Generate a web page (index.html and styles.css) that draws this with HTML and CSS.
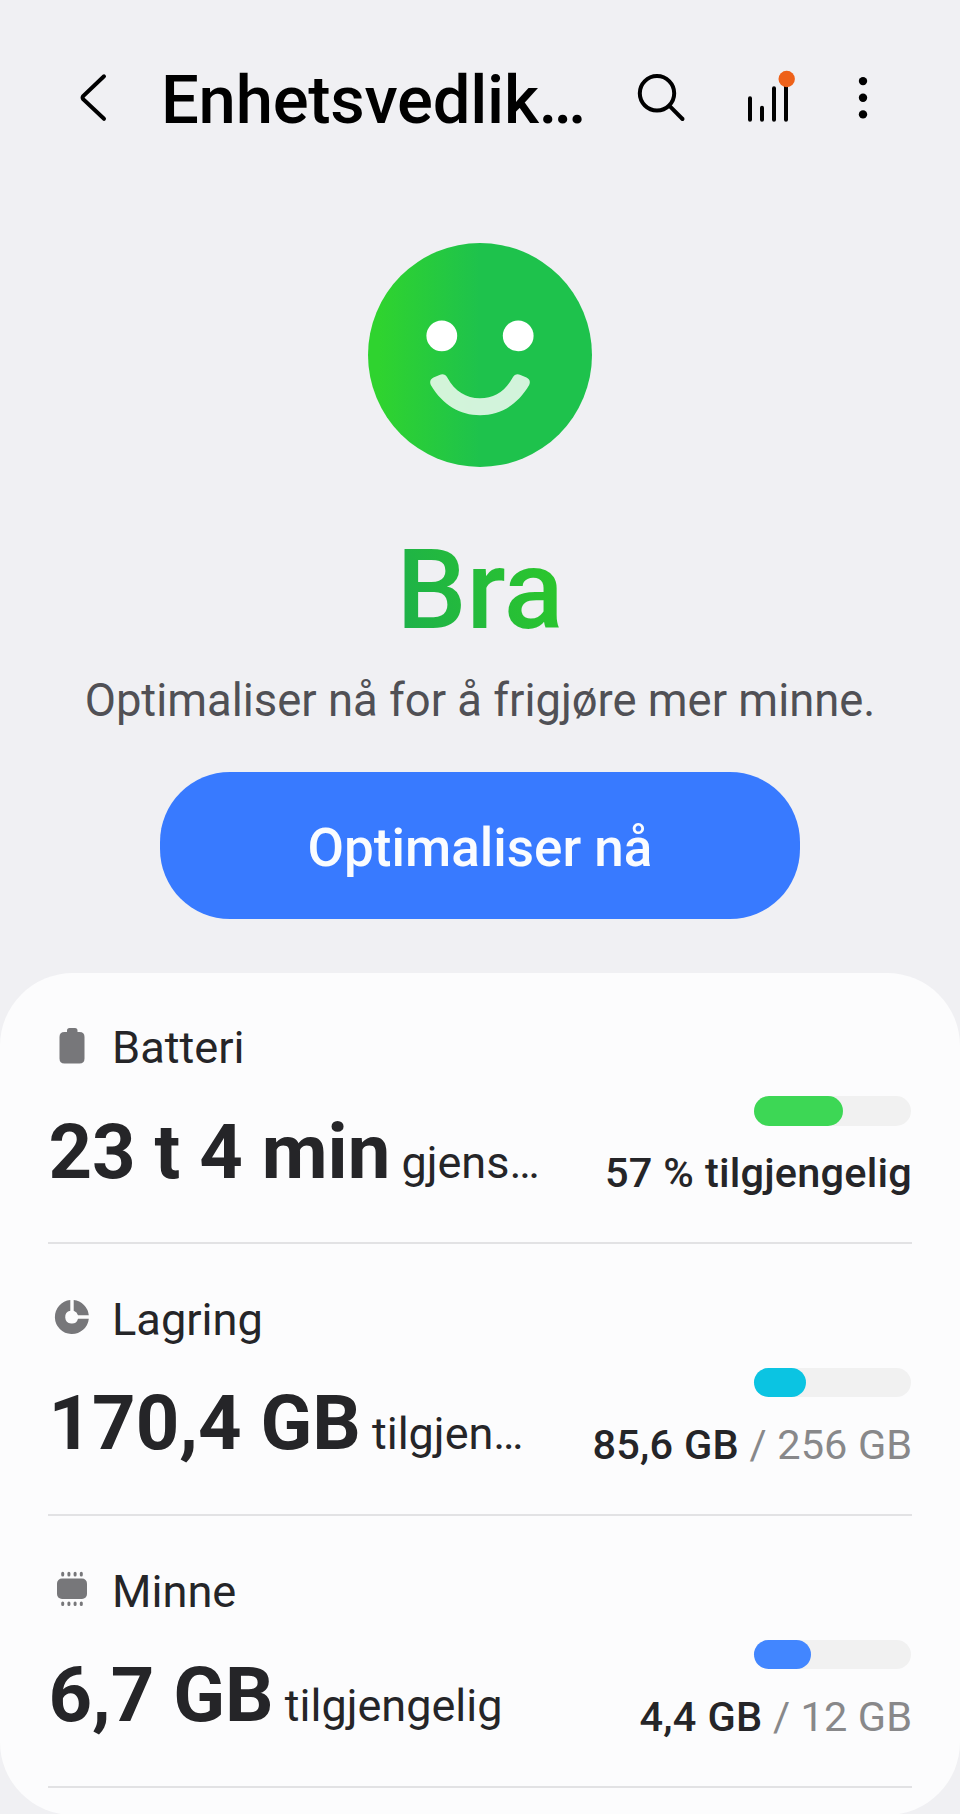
FILE: index.html
```
<!DOCTYPE html>
<html lang="no">
<head>
  <meta charset="UTF-8" />
  <meta name="viewport" content="width=device-width, initial-scale=1.0"/>
  <title>Enhetsvedlikehold</title>
  <link rel="stylesheet" href="styles.css">
</head>
<body>
  <header class="header">
    <svg class="icon back" viewBox="0 0 60 60">
      <path d="M40 8.3 L19.2 28 Q18 29.6 19.2 31.2 L40 50.8"/>
    </svg>
    <h1>Enhetsvedlik…</h1>
    <svg class="icon search" viewBox="0 0 60 60">
      <circle cx="27" cy="25.3" r="17.2"/>
      <path d="M39.7 38.2 L52.5 51"/>
    </svg>
    <svg class="icon stats" viewBox="0 0 60 60">
      <path d="M12 30.3 V51.7 M24 39.8 V51.7 M36 20.3 V51.7 M48 14 V51.7"/>
      <circle class="badge" cx="48.7" cy="11" r="8.2"/>
    </svg>
    <svg class="icon more" viewBox="0 0 60 60">
      <circle cx="30" cy="13.1" r="4.2"/>
      <circle cx="30" cy="29.8" r="4.2"/>
      <circle cx="30" cy="46.4" r="4.2"/>
    </svg>
  </header>

  <section class="status">
    <svg class="face" viewBox="0 0 224 224">
      <defs>
        <linearGradient id="faceFill" x1="0" y1="0" x2="1" y2="0">
          <stop offset="0.05" stop-color="#2fd32f"/>
          <stop offset="0.5" stop-color="#1ec24c"/>
        </linearGradient>
      </defs>
      <circle cx="112" cy="112" r="112" fill="url(#faceFill)"/>
      <circle cx="73.8" cy="92.8" r="15.4" fill="#fff"/>
      <circle cx="150.2" cy="92.8" r="15.4" fill="#fff"/>
      <path class="smile" d="M71.5 131.9 Q76.5 129.8 79.3 134.5 C87 148.5 98 155.2 112 155.2 S137 148.5 144.7 134.5 Q147.5 129.8 152.5 131.9 L158.5 134.5 Q163.3 137 161.2 142 C149 162.5 132 172.2 112 172.2 S75 162.5 62.8 142 Q60.7 137 65.5 134.5 Z"/>
    </svg>
    <h2>Bra</h2>
    <p>Optimaliser nå for å frigjøre mer minne.</p>
    <button>Optimaliser nå</button>
  </section>

  <main class="card">
    <div class="row">
      <div class="info">
        <div class="label">
          <svg viewBox="0 0 48 48">
            <path d="M19 6.5 Q19 4 21.5 4 H27 Q29.5 4 29.5 6.5 V8 H31.5 Q36.5 8 36.5 13 V34.5 Q36.5 39.5 31.5 39.5 H16.5 Q11.5 39.5 11.5 34.5 V13 Q11.5 8 16.5 8 H19 Z"/>
          </svg>
          <span>Batteri</span>
        </div>
        <div class="value"><strong>23 t 4 min</strong> <span>gjens…</span></div>
      </div>
      <div class="usage">
        <div class="bar"><div class="fill battery" style="width: 57%"></div></div>
        <div class="amount"><b>57 % tilgjengelig</b></div>
      </div>
    </div>

    <div class="row">
      <div class="info">
        <div class="label">
          <svg viewBox="0 0 48 48">
            <path d="M22.3 5.1 A17 17 0 1 0 40.8 23.7 H30 A6.5 6.5 0 1 1 22.3 15.7 Z"/>
            <path d="M25.7 5.1 A17 17 0 0 1 40.8 20.3 H30 A6.5 6.5 0 0 0 25.7 15.7 Z"/>
          </svg>
          <span>Lagring</span>
        </div>
        <div class="value"><strong>170,4 GB</strong> <span>tilgjen…</span></div>
      </div>
      <div class="usage">
        <div class="bar"><div class="fill storage" style="width: 33.6%"></div></div>
        <div class="amount"><b>85,6 GB</b> / 256 GB</div>
      </div>
    </div>

    <div class="row">
      <div class="info">
        <div class="label">
          <svg viewBox="0 0 48 48">
            <rect x="9" y="11.5" width="30" height="20.5" rx="5"/>
            <path class="pins" d="M14.7 6.3 V8 M20.9 6.3 V8 M27.1 6.3 V8 M33.3 6.3 V8 M14.7 35.9 V37.6 M20.9 35.9 V37.6 M27.1 35.9 V37.6 M33.3 35.9 V37.6"/>
          </svg>
          <span>Minne</span>
        </div>
        <div class="value"><strong>6,7 GB</strong> <span>tilgjengelig</span></div>
      </div>
      <div class="usage">
        <div class="bar"><div class="fill memory" style="width: 36.7%"></div></div>
        <div class="amount"><b>4,4 GB</b> / 12 GB</div>
      </div>
    </div>
  </main>
</body>
</html>
```
FILE: styles.css
```
* {
  box-sizing: border-box;
}
body {
  margin: 0;
  height: 1814px;
  overflow: hidden;
  background: #f0f0f3;
  font-family: Roboto, sans-serif;
  color: #252528;
}
h1, h2, p {
  margin: 0;
}
.header {
  display: flex;
  align-items: center;
  height: 196px;
  padding-left: 64px;
}
.icon {
  flex: none;
  width: 60px;
  height: 60px;
  fill: none;
  stroke: #000;
  stroke-width: 4;
  stroke-linecap: round;
}
.header h1 {
  width: 469px;
  margin-left: 37px;
  padding-top: 4px;
  font-size: 67px;
  font-weight: 500;
  line-height: 80px;
  letter-spacing: -0.25px;
  white-space: nowrap;
  color: #000;
}
.stats {
  margin-left: 48px;
}
.stats .badge {
  fill: #ee6119;
  stroke: none;
}
.more {
  margin-left: 35px;
  fill: #000;
  stroke: none;
}
.status {
  display: flex;
  flex-direction: column;
  align-items: center;
  height: 776.5px;
  padding-top: 46.5px;
}
.face {
  width: 224px;
  height: 224px;
}
.smile {
  fill: #fff;
  fill-opacity: 0.8;
}
.status h2 {
  margin-top: 63px;
  font-size: 111px;
  font-weight: 500;
  line-height: 120px;
  background: linear-gradient(75deg, #1db04b, #2cc829);
  -webkit-background-clip: text;
  background-clip: text;
  color: transparent;
}
.status p {
  margin-top: 21px;
  font-size: 45.4px;
  line-height: 60px;
  white-space: nowrap;
  color: #505055;
}
.status button {
  width: 640px;
  height: 147px;
  margin-top: 41px;
  padding: 6px 0 0;
  border: none;
  border-radius: 70px;
  background: #387aff;
  color: #fafcff;
  font-family: inherit;
  font-size: 53px;
  font-weight: 500;
}
.card {
  height: 842px;
  padding: 0 48px;
  border-radius: 73px;
  background: #fcfcfd;
}
.row {
  display: flex;
  justify-content: space-between;
  height: 272px;
  border-bottom: 2.5px solid #e2e2e4;
}
.row:first-child {
  height: 271.5px;
}
.info {
  padding-top: 48px;
}
.label {
  display: flex;
  align-items: center;
  height: 54px;
  font-size: 45.2px;
}
.label svg {
  width: 48px;
  height: 48px;
  margin-right: 16px;
  fill: #77777a;
}
.label .pins {
  stroke: #77777a;
  stroke-width: 3;
  stroke-linecap: round;
}
.value {
  margin-top: 32px;
  padding-left: 0.5px;
  font-size: 45px;
  line-height: 90px;
  white-space: nowrap;
}
.value strong {
  font-size: 76px;
  font-weight: 700;
}
.usage {
  display: flex;
  flex-direction: column;
  align-items: flex-end;
  padding-top: 123.5px;
}
.bar {
  width: 157.5px;
  height: 29.5px;
  margin-right: 1px;
  border-radius: 15px;
  background: #f1f1f1;
}
.fill {
  height: 100%;
  border-radius: 15px;
}
.battery {
  background: #3dd755;
}
.storage {
  background: #0bc4e2;
}
.memory {
  background: #4286ff;
}
.amount {
  margin-top: 22.5px;
  font-size: 41.5px;
  line-height: 50px;
  word-spacing: 0.3px;
  white-space: nowrap;
  color: #88888a;
}
.amount b {
  font-weight: 500;
  letter-spacing: 0.2px;
  color: #252528;
}
```
